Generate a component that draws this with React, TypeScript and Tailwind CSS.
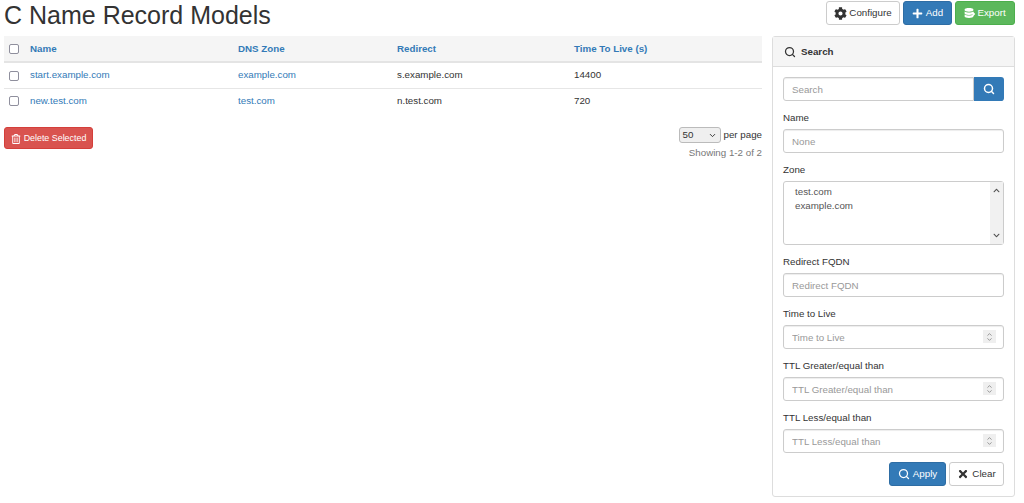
import { Search, ChevronUp, ChevronDown } from 'lucide-react';
import { FaCog, FaPlus, FaTimes, FaRegTrashAlt, FaDatabase, FaCaretRight, FaChevronUp, FaChevronDown } from 'react-icons/fa';

const inputClass =
  'block h-6 w-full rounded-[3px] border border-[#ccc] bg-white px-2 text-[9.75px] text-[#555] shadow-[inset_0_1px_1px_rgba(0,0,0,0.075)] outline-none placeholder:text-[#999]';
const checkClass = 'block size-[10px] appearance-none rounded-[2px] border border-[#8f8f9d] bg-white';

function Field({ label, children }: { label: string; children: React.ReactNode }) {
  return (
    <div className="mb-[9px]">
      <label className="mb-1 block text-[9.75px] leading-[15px] text-[#333]">{label}</label>
      {children}
    </div>
  );
}

function NumberInput({ placeholder }: { placeholder: string }) {
  return (
    <div className="relative">
      <input placeholder={placeholder} className={inputClass} />
      <span className="absolute top-[5px] right-[8px] flex h-[13px] w-[13px] flex-col items-center justify-center bg-[#efefef] text-[#777]">
        <ChevronUp className="-mb-[2px] size-[7px]" strokeWidth={2.5} />
        <ChevronDown className="size-[7px]" strokeWidth={2.5} />
      </span>
    </div>
  );
}

function Row({ name, zone, redirect, ttl, last }: { name: string; zone: string; redirect: string; ttl: string; last?: boolean }) {
  return (
    <div className={last ? 'flex h-[26px] items-center pb-[2px] text-[9.75px]' : 'flex h-[26px] items-center border-b border-[#e6e6e6] text-[9.75px]'}>
      <div className="w-[26px] pl-[5px]">
        <input type="checkbox" className={checkClass} />
      </div>
      <a className="w-[208px] text-[#337ab7]">{name}</a>
      <a className="w-[159px] text-[#337ab7]">{zone}</a>
      <div className="w-[177px]">{redirect}</div>
      <div>{ttl}</div>
    </div>
  );
}

export default function App() {
  return (
    <div
      className="h-[503px] w-[1024px] overflow-hidden bg-white text-[#333]"
      style={{ fontFamily: '"Liberation Sans", Arial, sans-serif' }}
    >
      <header className="flex h-9 items-start justify-between pr-[9px] pl-1">
        <h1 className="text-[25px] leading-[30px] font-normal">C Name Record Models</h1>
        <div className="mt-px flex gap-[3px] text-[9.75px]">
          <button className="flex h-6 w-[74px] items-center justify-center gap-[2px] rounded-[3px] border border-[#ccc] bg-white">
            <FaCog className="size-[13px]" />
            Configure
          </button>
          <button className="flex h-6 w-[49px] items-center justify-center gap-[3px] rounded-[3px] border border-[#2e6da4] bg-[#337ab7] text-white">
            <FaPlus className="size-[11px]" />
            Add
          </button>
          <button className="flex h-6 w-[60px] items-center justify-center gap-[3px] rounded-[3px] border border-[#4cae4c] bg-[#5cb85c] text-white">
            <span className="relative">
              <FaDatabase className="size-[10px]" />
              <FaCaretRight className="absolute top-[2px] left-[6px] size-2" />
            </span>
            Export
          </button>
        </div>
      </header>

      <div className="flex gap-[10px] pl-1">
        <main className="w-[758px]">
          <div className="flex h-[27px] items-center border-b-2 border-[#e4e4e4] bg-[#f5f5f5] pt-px text-[9.75px] font-bold text-[#337ab7]">
            <div className="w-[26px] pl-[5px]">
              <input type="checkbox" className={checkClass} />
            </div>
            <div className="w-[208px]">Name</div>
            <div className="w-[159px]">DNS Zone</div>
            <div className="w-[177px]">Redirect</div>
            <div>Time To Live (s)</div>
          </div>
          <Row name="start.example.com" zone="example.com" redirect="s.example.com" ttl="14400" />
          <Row name="new.test.com" zone="test.com" redirect="n.test.com" ttl="720" last />

          <div className="mt-[12px] flex items-start justify-between">
            <button className="flex h-[22px] w-[89px] items-center justify-center gap-[3px] rounded-[3px] border border-[#d43f3a] bg-[#d9534f] pt-px text-[8.9px] text-white">
              <FaRegTrashAlt className="size-[10px]" />
              Delete Selected
            </button>
            <div className="text-right text-[9.75px]">
              <div className="flex h-[16px] items-center justify-end gap-[3px]">
                <span className="flex h-[16px] w-[42px] items-center justify-between rounded-[3px] border border-[#bbb] bg-[#efefef] px-[3px]">
                  50
                  <ChevronDown className="size-[9px]" strokeWidth={2.5} />
                </span>
                per page
              </div>
              <div className="mt-[3px] text-[#777]">Showing 1-2 of 2</div>
            </div>
          </div>
        </main>

        <aside className="h-[461px] w-[243px] rounded-[3px] border border-[#ddd]">
          <div className="flex h-[30px] items-center gap-[5px] border-b border-[#ddd] bg-[#f5f5f5] pt-[1px] pl-[11px] text-[9.75px] font-bold">
            <Search className="size-3" strokeWidth={2.5} />
            Search
          </div>
          <div className="px-[10px] pt-[10px]">
            <div className="mb-[9px] flex">
              <input placeholder="Search" className={inputClass + ' rounded-r-none'} />
              <button className="flex h-6 w-[30px] shrink-0 items-center justify-center rounded-r-[3px] bg-[#337ab7] text-white">
                <Search className="size-3" strokeWidth={3} />
              </button>
            </div>
            <Field label="Name">
              <input placeholder="None" className={inputClass} />
            </Field>
            <div className="mb-[9px]">
              <label className="mb-1 block text-[9.75px] leading-[15px]">Zone</label>
              <div className="flex h-[64px] rounded-[3px] border border-[#ccc] text-[9.75px] text-[#555]">
                <div className="flex-1 pt-[3px] pl-[11px] leading-[14px]">
                  <div>test.com</div>
                  <div>example.com</div>
                </div>
                <div className="flex w-[13px] flex-col items-center justify-between bg-[#f1f1f1] py-[5px] text-[#505050]">
                  <FaChevronUp className="size-[7px]" />
                  <FaChevronDown className="size-[7px]" />
                </div>
              </div>
            </div>
            <Field label="Redirect FQDN">
              <input placeholder="Redirect FQDN" className={inputClass} />
            </Field>
            <Field label="Time to Live">
              <NumberInput placeholder="Time to Live" />
            </Field>
            <Field label="TTL Greater/equal than">
              <NumberInput placeholder="TTL Greater/equal than" />
            </Field>
            <Field label="TTL Less/equal than">
              <NumberInput placeholder="TTL Less/equal than" />
            </Field>
            <div className="flex justify-end gap-[3px] text-[9.75px]">
              <button className="flex h-6 w-[57px] items-center justify-center gap-[3px] rounded-[3px] border border-[#2e6da4] bg-[#337ab7] text-white">
                <Search className="size-3" strokeWidth={2.5} />
                Apply
              </button>
              <button className="flex h-6 w-[55px] items-center justify-center gap-[3px] rounded-[3px] border border-[#ccc] bg-white">
                <FaTimes className="size-[12px]" />
                Clear
              </button>
            </div>
          </div>
        </aside>
      </div>
    </div>
  );
}
